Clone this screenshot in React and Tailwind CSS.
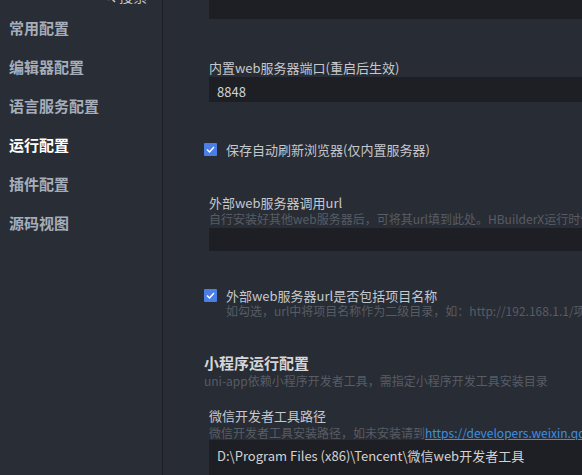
import React from 'react';

const menu = ['常用配置', '编辑器配置', '语言服务配置', '运行配置', '插件配置', '源码视图'];

function Checkbox() {
  return (
    <span className="w-[13px] h-[13px] bg-[#4c7fe6] rounded-[1px] flex items-center justify-center shrink-0">
      <svg width="9" height="7" viewBox="0 0 9 7" fill="none">
        <path d="M1 3.5 L3.5 6 L8 1" stroke="#ffffff" strokeWidth="1.4" />
      </svg>
    </span>
  );
}

function Input({ value, className = '' }) {
  return (
    <div className={`ml-[5px] bg-[#1e1f24] flex items-center pl-[8px] pt-[5px] text-[13px] text-[#d2d2d2] whitespace-nowrap ${className}`}>
      {value}
    </div>
  );
}

export default function App() {
  const active = '运行配置';
  return (
    <div className="w-[582px] h-[475px] overflow-hidden flex bg-[#282c34] font-['Noto_Sans_CJK_SC','Microsoft_YaHei',sans-serif]">
      {/* sidebar */}
      <div className="w-[163px] shrink-0 bg-[#292d36] border-r border-[#1c1e23] flex flex-col">
        <div className="h-[20px] -mt-[14px] mb-[3px] flex items-center pl-[103px] gap-[3px] text-[14px] text-[#c4c7cc]">
          <svg width="13" height="13" viewBox="0 0 13 13" fill="none">
            <circle cx="5.5" cy="5.5" r="4" stroke="#c4c7cc" strokeWidth="1.3" />
            <path d="M8.5 8.5 L12 12" stroke="#c4c7cc" strokeWidth="1.5" />
          </svg>
          <span>搜索</span>
        </div>
        {menu.map(m => (
          <div
            key={m}
            className={`h-[39px] flex items-center pl-[9px] text-[15px] font-bold ${m === active ? 'text-white' : 'text-[#a6adba]'}`}
          >
            {m}
          </div>
        ))}
      </div>

      {/* main */}
      <div className="flex-1 min-w-0 pl-[41px] flex flex-col whitespace-nowrap">
        <div className="ml-[5px] h-[23px] bg-[#1e1f24]" />

        <div className="mt-[40px] ml-[5px] h-[18px] leading-[18px] text-[13px] text-[#c6c8cc]">内置web服务器端口(重启后生效)</div>
        <Input value="8848" className="h-[27px]" />

        <div className="mt-[39px] h-[18px] flex items-center gap-[9px] text-[13px] text-[#c6c8cc]">
          <Checkbox />
          <span>保存自动刷新浏览器(仅内置服务器)</span>
        </div>

        <div className="mt-[35px] ml-[5px] h-[18px] leading-[18px] text-[13px] text-[#c6c8cc]">外部web服务器调用url</div>
        <div className="ml-[5px] h-[14px] leading-[14px] text-[12px] text-[#585c64]">自行安装好其他web服务器后，可将其url填到此处。HBuilderX运行时使用该url访问</div>
        <Input value="" className="mt-[2px] h-[27px]" />

        <div className="mt-[35px] h-[18px] flex items-center gap-[9px] text-[13px] text-[#c6c8cc]">
          <Checkbox />
          <span>外部web服务器url是否包括项目名称</span>
        </div>
        <div className="ml-[22px] h-[14px] leading-[14px] text-[12px] text-[#585c64]">如勾选，url中将项目名称作为二级目录，如：http://192.168.1.1/项目名称/</div>

        <div className="mt-[35px] h-[20px] leading-[20px] text-[15px] font-bold text-[#d4d6da]">小程序运行配置</div>
        <div className="h-[16px] leading-[16px] text-[12px] text-[#585c64]">uni-app依赖小程序开发者工具，需指定小程序开发工具安装目录</div>

        <div className="mt-[18px] ml-[5px] h-[18px] leading-[18px] text-[13px] text-[#c6c8cc]">微信开发者工具路径</div>
        <div className="mt-[1px] ml-[5px] h-[14px] leading-[14px] text-[12px] text-[#585c64]">
          微信开发者工具安装路径，如未安装请到<span className="text-[#3d8fe0] underline">https://developers.weixin.qq.com/miniprogram/dev/devtools/download.html</span>
        </div>
        <div className="ml-[5px] h-[40px] bg-[#1e1f24] pl-[8px] pt-[7px] text-[13px] leading-[18px] text-[#d2d2d2]">
          D:\Program Files (x86)\Tencent\微信web开发者工具
        </div>
      </div>
    </div>
  );
}
